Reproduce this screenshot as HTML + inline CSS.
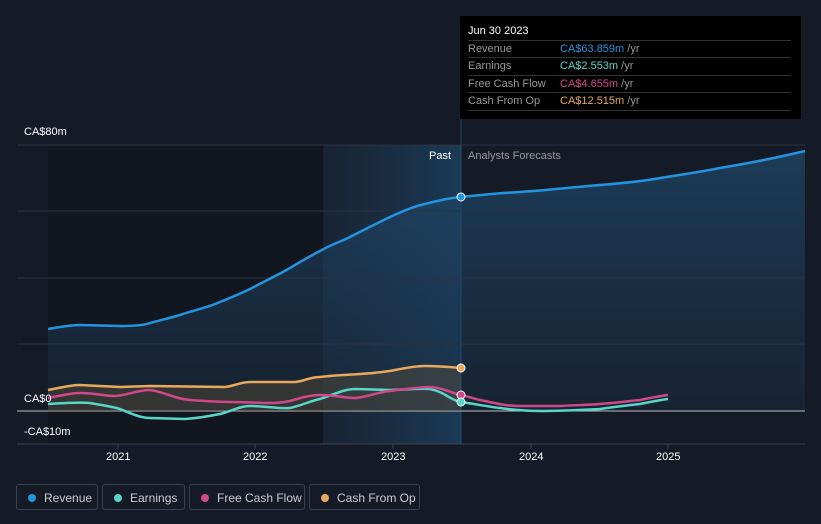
<!DOCTYPE html>
<html><head><style>
body{margin:0;background:#151b26;font-family:"Liberation Sans",sans-serif;width:821px;height:524px;overflow:hidden;position:relative}
.t{position:absolute;font-size:11px;color:#fff}
.tip{position:absolute;left:460px;top:16px;width:341px;height:103px;background:#000;color:#fff;font-size:11px}
.tip .r{position:absolute;left:8px;width:323px;border-top:1px solid #333;height:17px;line-height:17px;color:#999}
.tip .r span{position:absolute;left:92px}
.lg{position:absolute;top:484px;height:26px;border:1px solid #3a4150;border-radius:3px;color:#ccc;font-size:12px;line-height:26px;box-sizing:border-box}
.lg i{position:absolute;left:11px;top:9px;width:8px;height:8px;border-radius:50%}
.lg b{font-weight:normal;position:absolute;left:27px}
</style></head><body>
<svg width="821" height="524" style="position:absolute;left:0;top:0">
<defs>
<linearGradient id="pg" x1="0" x2="1"><stop offset="0" stop-color="#1a2a3d" stop-opacity=".6"/><stop offset="1" stop-color="#1b3a57"/></linearGradient>
<linearGradient id="rv" x1="0" y1="0" x2="0" y2="1"><stop offset="0" stop-color="#1f4a6e" stop-opacity=".7"/><stop offset="1" stop-color="#1a2c40" stop-opacity=".5"/></linearGradient>
</defs>
<rect x="48" y="145" width="275" height="299" fill="#12161f"/>
<rect x="323" y="145" width="138" height="299" fill="url(#pg)"/>
<path d="M48,329 C60,327 70,325 80,325 L120,326 C135,326 145,325 150,323 C165,319 170,318 180,315 C195,310 205,308 215,304 C230,298 240,294 250,289 C265,281 280,274 290,268 C300,262 310,256 320,251 C330,245 340,242 350,237 C365,229 378,223 390,217 C405,210 415,206 425,204 C440,200 450,198 461,197 C480,195 500,193 520,192 C550,190 575,187 600,185 C625,183 645,181 660,178 C680,175 700,172 720,168 C750,163 780,157 805,151 L805,411 L48,411Z" fill="url(#rv)"/>
<g stroke="#2a3240" stroke-width="1"><line x1="17" y1="145" x2="805" y2="145"/><line x1="17" y1="211" x2="805" y2="211"/><line x1="17" y1="278" x2="805" y2="278"/><line x1="17" y1="344" x2="805" y2="344"/><line x1="17" y1="444" x2="805" y2="444" stroke="#3a4150"/></g>
<line x1="461" y1="16" x2="461" y2="444" stroke="#1e4a6e"/>
<line x1="17" y1="411" x2="805" y2="411" stroke="#bbb"/>
<path d="M48,390 C60,388 70,385 80,385 L120,387 L150,386 L225,387 C235,386 240,382 250,382 L295,382 C305,381 310,377 320,377 C335,375 345,375 360,374 C375,373 385,372 395,370 C405,368 415,366 425,366 C440,366 450,367 461,368 L461,411 L48,411Z" fill="#6b5a3a" opacity=".35"/>
<path d="M48,390 C60,388 70,385 80,385 L120,387 L150,386 L225,387 C235,386 240,382 250,382 L295,382 C305,381 310,377 320,377 C335,375 345,375 360,374 C375,373 385,372 395,370 C405,368 415,366 425,366 C440,366 450,367 461,368" fill="none" stroke="#e8a95c" stroke-width="2.5"/>
<path d="M48,404 C65,403 80,402 90,403 C100,405 110,406 120,409 C130,413 140,418 150,418 L185,419 C200,418 210,416 220,414 C232,411 240,406 250,406 C265,406 280,409 290,408 C300,406 310,401 320,399 C335,394 345,389 355,389 L390,390 C405,390 420,388 430,389 C445,392 450,400 461,402 C475,404 490,407 500,408 C515,410 525,411 540,411 C560,411 580,410 600,409 C615,407 630,405 640,404 C650,402 660,400 668,399" fill="none" stroke="#58d6c8" stroke-width="2.5"/>
<path d="M48,398 C60,396 70,393 80,393 C95,393 105,396 115,396 C128,395 138,390 150,390 C165,392 175,399 190,400 C205,401 220,402 230,402 C245,402 260,403 270,403 C280,403 285,402 290,401 C300,398 310,395 320,395 C335,395 345,398 355,398 C368,397 378,392 390,391 C405,389 420,387 430,387 C445,388 450,393 461,395 C470,397 475,399 480,400 C495,403 505,406 520,406 L560,406 C575,405 590,405 600,404 C615,403 630,401 640,400 C650,398 660,396 668,395" fill="none" stroke="#d0488a" stroke-width="2.5"/>
<path d="M48,329 C60,327 70,325 80,325 L120,326 C135,326 145,325 150,323 C165,319 170,318 180,315 C195,310 205,308 215,304 C230,298 240,294 250,289 C265,281 280,274 290,268 C300,262 310,256 320,251 C330,245 340,242 350,237 C365,229 378,223 390,217 C405,210 415,206 425,204 C440,200 450,198 461,197 C480,195 500,193 520,192 C550,190 575,187 600,185 C625,183 645,181 660,178 C680,175 700,172 720,168 C750,163 780,157 805,151" fill="none" stroke="#2394e0" stroke-width="2.5"/>
<circle cx="461" cy="197" r="4" fill="#2394e0" stroke="#fff"/>
<circle cx="461" cy="368" r="4" fill="#e8a95c" stroke="#fff"/>
<circle cx="461" cy="395" r="4" fill="#d0488a" stroke="#fff"/>
<circle cx="461" cy="402" r="4" fill="#58d6c8" stroke="#fff"/>
<g stroke="#3a4150"><line x1="118" y1="444" x2="118" y2="449"/><line x1="255" y1="444" x2="255" y2="449"/><line x1="393" y1="444" x2="393" y2="449"/><line x1="531" y1="444" x2="531" y2="449"/><line x1="668" y1="444" x2="668" y2="449"/></g>
</svg>
<div class="t" style="left:24px;top:126px">CA$80m</div>
<div class="t" style="left:24px;top:393px">CA$0</div>
<div class="t" style="left:24px;top:426px">-CA$10m</div>
<div class="t" style="left:429px;top:150px">Past</div>
<div class="t" style="left:468px;top:150px;color:#999">Analysts Forecasts</div>
<div class="t" style="left:106px;top:451px">2021</div>
<div class="t" style="left:243px;top:451px">2022</div>
<div class="t" style="left:381px;top:451px">2023</div>
<div class="t" style="left:519px;top:451px">2024</div>
<div class="t" style="left:656px;top:451px">2025</div>
<div class="tip">
<div style="position:absolute;left:8px;top:9px">Jun 30 2023</div>
<div class="r" style="top:24px">Revenue<span><b style="font-weight:normal;color:#2394e0">CA$63.859m</b> /yr</span></div>
<div class="r" style="top:41px">Earnings<span><b style="font-weight:normal;color:#58d6c8">CA$2.553m</b> /yr</span></div>
<div class="r" style="top:59px">Free Cash Flow<span><b style="font-weight:normal;color:#d0488a">CA$4.655m</b> /yr</span></div>
<div class="r" style="top:76px">Cash From Op<span><b style="font-weight:normal;color:#e8a95c">CA$12.515m</b> /yr</span></div>
<div class="r" style="top:94px;height:0"></div>
</div>
<div class="lg" style="left:16px;width:82px"><i style="background:#2394e0"></i><b>Revenue</b></div>
<div class="lg" style="left:102px;width:83px"><i style="background:#58d6c8"></i><b>Earnings</b></div>
<div class="lg" style="left:189px;width:116px"><i style="background:#d0488a"></i><b>Free Cash Flow</b></div>
<div class="lg" style="left:309px;width:111px"><i style="background:#e8a95c"></i><b>Cash From Op</b></div>
</body></html>
